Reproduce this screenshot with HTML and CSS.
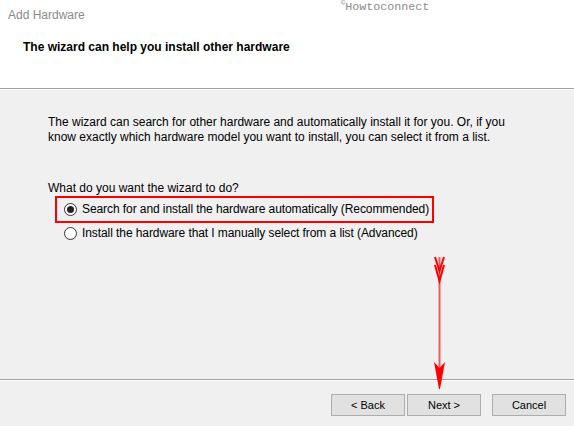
FILE: index.html
```html
<!DOCTYPE html>
<html lang="en">
<head>
    <meta charset="UTF-8">
    <meta name="viewport" content="width=device-width, initial-scale=1.0">
    <title>Add Hardware</title>
    <link rel="stylesheet" href="styles.css">
</head>
<body>
    <div class="wizard">
        <!-- Header -->
        <header class="wizard-top">
            <div class="wizard-title">Add Hardware</div>
            <h1>The wizard can help you install other hardware</h1>
            <span class="watermark"><sup>©</sup>Howtoconnect</span>
        </header>

        <!-- Body -->
        <main class="wizard-body">
            <p class="intro">The wizard can search for other hardware and automatically install it for you. Or, if you<br>know exactly which hardware model you want to install, you can select it from a list.</p>
            <p class="question">What do you want the wizard to do?</p>
            <div class="options">
                <label class="option highlighted">
                    <span class="radio checked"></span>
                    <span>Search for and install the hardware automatically (Recommended)</span>
                </label>
                <label class="option">
                    <span class="radio"></span>
                    <span>Install the hardware that I manually select from a list (Advanced)</span>
                </label>
            </div>
        </main>

        <!-- Buttons -->
        <footer class="wizard-actions">
            <button class="btn">&lt; Back</button>
            <button class="btn">Next &gt;</button>
            <button class="btn cancel">Cancel</button>
        </footer>

        <!-- Red arrow annotation -->
        <svg class="arrow" width="574" height="426" viewBox="0 0 574 426">
            <line x1="439.5" y1="257" x2="439.5" y2="370" stroke="#f25a5a" stroke-width="2"/>
            <polyline points="435,257 439.5,271 444,257" fill="none" stroke="#f00" stroke-width="2"/>
            <polyline points="435,265 439.5,281 444,265" fill="none" stroke="#f00" stroke-width="2"/>
            <path d="M434,362 L439.5,368 L445,362 L440,389 L439,389 Z" fill="#f00"/>
        </svg>
    </div>
</body>
</html>
```

FILE: styles.css
```css
/* Основные стили */
body {
    margin: 0;
    background-color: #f0f0f0;
    font-family: "Liberation Sans", Arial, sans-serif;
    color: #000;
}

.wizard {
    position: relative;
    width: 574px;
    height: 426px;
    overflow: hidden;
}

/* Шапка */
.wizard-top {
    box-sizing: border-box;
    height: 89px;
    background-color: #fff;
    border-bottom: 1px solid #a0a0a0;
    padding: 7px 0 0 8px;
}

.wizard-title {
    font-size: 12px;
    line-height: 16px;
    color: #8a8a8a;
}

.wizard-top h1 {
    margin: 17px 0 0 15px;
    font-size: 12px;
    line-height: 14px;
    font-weight: bold;
}

.watermark {
    position: absolute;
    top: -1px;
    left: 341px;
    font-family: "Liberation Mono", "Courier New", monospace;
    font-size: 11.7px;
    color: #8a8a8a;
}

.watermark sup {
    font-size: 7px;
}

/* Основная часть */
.wizard-body {
    box-sizing: border-box;
    height: 290px;
    border-top: 1px solid #fff;
    padding: 25px 0 0 48px;
    font-size: 12px;
    line-height: 15px;
}

.intro {
    margin: 0;
}

.question {
    margin: 36px 0 0;
}

.options {
    display: flex;
    flex-direction: column;
    align-items: flex-start;
    margin-left: 7px;
    letter-spacing: -0.08px;
}

.option {
    display: flex;
    align-items: center;
    gap: 5px;
    height: 20px;
    padding: 0 3px 0 9px;
}

.option.highlighted {
    height: 23px;
    padding-left: 7px;
    border: 2px solid #f00;
}

.radio {
    box-sizing: border-box;
    width: 13px;
    height: 13px;
    border: 1px solid #333;
    border-radius: 50%;
    background-color: #fff;
    display: flex;
    align-items: center;
    justify-content: center;
}

.radio.checked::after {
    content: "";
    width: 7px;
    height: 7px;
    border-radius: 50%;
    background-color: #222;
}

/* Кнопки */
.wizard-actions {
    display: flex;
    justify-content: flex-end;
    gap: 2px;
    border-top: 1px solid #a0a0a0;
    box-shadow: inset 0 1px 0 #fff;
    padding: 14px 8px 0 0;
}

.btn {
    box-sizing: border-box;
    width: 74px;
    height: 22px;
    padding: 0;
    background-color: #e1e1e1;
    border: 1px solid #adadad;
    font-family: "Liberation Sans", Arial, sans-serif;
    font-size: 11px;
    color: #000;
}

.btn.cancel {
    margin-left: 9px;
}

/* Стрелка */
.arrow {
    position: absolute;
    top: 0;
    left: 0;
    pointer-events: none;
}
```
